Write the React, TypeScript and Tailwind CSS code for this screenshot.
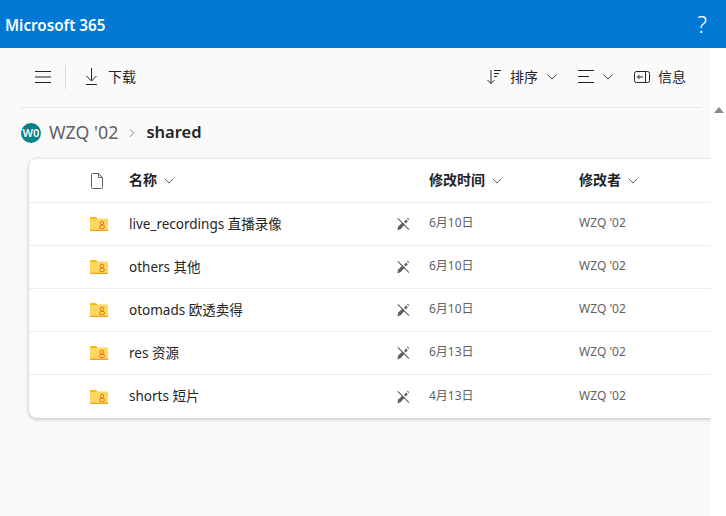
import { ChevronDown, ChevronRight } from "lucide-react";

const rows = [
  { name: "live_recordings 直播录像", date: "6月10日" },
  { name: "others 其他", date: "6月10日" },
  { name: "otomads 欧透卖得", date: "6月10日" },
  { name: "res 资源", date: "6月13日" },
  { name: "shorts 短片", date: "4月13日" },
];

function FolderIcon() {
  return (
    <svg width="18" height="14" viewBox="0 0 18 14" className="block">
      <path d="M0 1a1 1 0 0 1 1-1h5l2 2H0z" fill="#ffb900" />
      <path d="M0 2h8l1-.5h8a1 1 0 0 1 1 1V13H0z" fill="#ffd75e" />
      <rect x="0" y="12.800" width="18" height="1.200" fill="#f2a01c" />
      <circle cx="12" cy="6" r="1.800" fill="none" stroke="#e0791f" strokeWidth="1" />
      <rect x="9.500" y="8.300" width="5" height="3.400" rx="1.700" fill="none" stroke="#e0791f" strokeWidth="1" />
    </svg>
  );
}

function SyncOffIcon() {
  return (
    <svg width="16" height="16" viewBox="0 0 16 16" className="block">
      <path d="M2.800 2.400 14 13.600" stroke="#605e5c" strokeWidth="1.100" fill="none" />
      <path d="M2.400 14.400 3.200 10.400 7.600 6.400 9.800 8.600 5.800 13z" fill="#605e5c" />
      <path d="M9 5.800 11.200 3.600 12.800 5.200 10.600 7.400z" fill="#605e5c" />
      <path d="M12.400 2.200 13.800 3.600" stroke="#605e5c" strokeWidth="1.200" fill="none" />
    </svg>
  );
}

export default function App() {
  return (
    <div className="flex h-[516px] w-[726px] flex-col overflow-hidden bg-[#fafafa] font-['Noto_Sans','Noto_Sans_CJK_SC',sans-serif] text-[#242424]">
      <header className="flex h-12 shrink-0 items-center justify-between bg-[#0078d4] pl-[5px] pr-[19px] text-white">
        <span className="translate-y-px text-[15.200px] font-semibold">Microsoft 365</span>
        <span className="text-[23px] font-light leading-none">?</span>
      </header>

      <div className="flex min-h-0 flex-1">
        <main className="w-[711px] shrink-0">
          <div className="ml-[21px] mr-[9px] flex h-[60px] items-center justify-between border-b border-[#e8e8e8] pb-[2px]">
            <div className="flex items-center">
              <svg width="16" height="12" viewBox="0 0 16 12" className="ml-[14px]">
                <path d="M0 .5h16M0 6h16M0 11.500h16" stroke="#242424" strokeWidth="1" />
              </svg>
              <div className="ml-[14px] h-6 w-px bg-[#d6d6d6]" />
              <svg width="13" height="17" viewBox="0 0 13 17" className="ml-[19px]">
                <path d="M6.500 0v12.500M1.500 8l5 5 5-5M1 16.500h11" stroke="#242424" strokeWidth="1" fill="none" />
              </svg>
              <span className="ml-[10px] text-[14px]">下载</span>
            </div>
            <div className="mr-[16px] flex items-center">
              <svg width="16" height="16" viewBox="0 0 16 16">
                <path d="M5 1v13.500M1.500 11l3.500 3.500 3.500-3.500" stroke="#242424" strokeWidth="1" fill="none" />
                <path d="M8 1.500h7M8 4.500h5M8 7.500h3" stroke="#242424" strokeWidth="1" />
              </svg>
              <span className="ml-[8px] text-[14px]">排序</span>
              <ChevronDown className="ml-[6px] h-4 w-4 text-[#424242]" strokeWidth={1.500} />
              <svg width="16" height="13" viewBox="0 0 16 13" className="ml-[18px]">
                <path d="M0 .5h16M0 6.500h11M0 12.500h16" stroke="#242424" strokeWidth="1" />
              </svg>
              <ChevronDown className="ml-[6px] h-4 w-4 text-[#424242]" strokeWidth={1.500} />
              <svg width="16" height="12" viewBox="0 0 16 12" className="ml-[18px]">
                <rect x=".5" y=".5" width="15" height="11" rx="2" fill="none" stroke="#242424" />
                <path d="M11.500 0v12M9 6H3.500M5.500 4 3.500 6l2 2" stroke="#242424" fill="none" />
              </svg>
              <span className="ml-[8px] text-[14px]">信息</span>
            </div>
          </div>

          <div className="ml-[21px] flex h-[50px] items-center">
            <div className="flex h-5 w-5 items-center justify-center rounded-full bg-[#038387] text-[11px] font-semibold text-white">
              W0
            </div>
            <span className="ml-2 -translate-y-px text-[17.800px] text-[#616161]">WZQ '02</span>
            <ChevronRight className="ml-[7px] h-[14px] w-[14px] text-[#757575]" strokeWidth={1.500} />
            <span className="ml-[7px] -translate-y-px text-[16.500px] font-semibold">shared</span>
          </div>

          <div className="ml-[29px] mt-[1px] overflow-hidden rounded-l-lg bg-white shadow-[0_1px_4px_rgba(0,0,0,0.25)]">
            <div className="flex h-[44px] items-center border-b border-[#ededed]">
              <div className="flex w-[400px] shrink-0 items-center">
                <svg width="12" height="16" viewBox="0 0 12 16" className="ml-[62px]">
                  <path d="M1.500.5h6l4 4v10a1 1 0 0 1-1 1h-9a1 1 0 0 1-1-1v-13a1 1 0 0 1 1-1zM7.500.5v4h4" fill="none" stroke="#616161" />
                </svg>
                <span className="ml-[26px] -translate-y-px text-[14px] font-semibold">名称</span>
                <ChevronDown className="ml-[4px] h-4 w-4 text-[#616161]" strokeWidth={1.500} />
              </div>
              <div className="flex w-[150px] shrink-0 items-center">
                <span className="-translate-y-px text-[14px] font-semibold">修改时间</span>
                <ChevronDown className="ml-[4px] h-4 w-4 text-[#616161]" strokeWidth={1.500} />
              </div>
              <span className="-translate-y-px text-[14px] font-semibold">修改者</span>
              <ChevronDown className="ml-[4px] h-4 w-4 text-[#616161]" strokeWidth={1.500} />
            </div>
            {rows.map((row, i) => (
              <div
                key={row.name}
                className={`flex h-[43px] items-center ${i < rows.length - 1 ? "border-b border-[#ededed]" : ""}`}
              >
                <div className="ml-[61px] w-[18px] shrink-0">
                  <FolderIcon />
                </div>
                <span className="ml-[21px] w-[266px] shrink-0 truncate text-[13.500px]">{row.name}</span>
                <SyncOffIcon />
                <span className="ml-[18px] w-[150px] shrink-0 -translate-y-px text-[12px] text-[#616161]">{row.date}</span>
                <span className="-translate-y-px text-[12px] text-[#616161]">WZQ '02</span>
              </div>
            ))}
          </div>
        </main>

        <aside className="flex w-[15px] shrink-0 justify-center bg-white pt-[59px]">
          <div className="h-0 w-0 border-x-[5px] border-b-[6px] border-x-transparent border-b-[#8a8a8a]" />
        </aside>
      </div>
    </div>
  );
}
